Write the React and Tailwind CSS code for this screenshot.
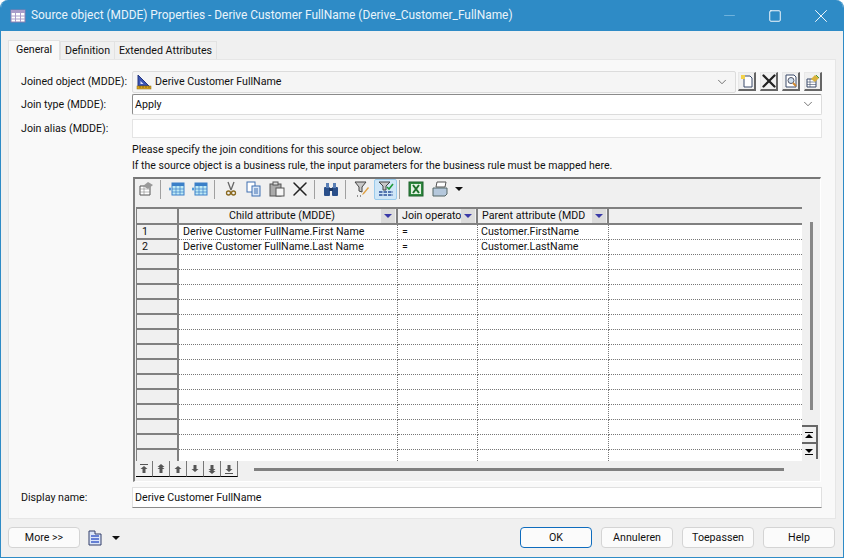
import React from 'react';
import { ChevronDown, Minus, Square, X } from 'lucide-react';

const Chevron = () => <ChevronDown className="w-[14px] h-[14px] text-[#444]" strokeWidth={1.25} />;

const TableIcon = ({ className = 'w-4 h-4' }) => (
  <svg viewBox="0 0 16 16" className={className}>
    <rect x="1" y="2" width="14" height="12" fill="#fff" stroke="#8a7fb0" />
    <rect x="1" y="2" width="14" height="3" fill="#a99cc9" />
    <path d="M1 8h14M1 11h14M5.500 5v9M10.500 5v9" stroke="#a99cc9" />
  </svg>
);

const RuleIcon = () => (
  <svg viewBox="0 0 16 16" className="w-4 h-4">
    <path d="M2 1v11h11z" fill="#3b55b5" stroke="#24367f" />
    <path d="M4.500 7v3h3z" fill="#dfe6fa" />
    <rect x="1" y="12" width="14" height="3" fill="#d9a520" stroke="#8a6a10" strokeWidth=".5" />
    <path d="M4 12v2M7 12v2M10 12v2M13 12v2" stroke="#6b5208" strokeWidth=".7" />
  </svg>
);

const SquareButton = ({ children }) => (
  <button className="w-[18px] h-[19px] bg-[#f0f0f0] border border-[#e8e8e8] border-r-2 border-b-2 border-r-[#666] border-b-[#666] flex items-center justify-center overflow-hidden">
    {children}
  </button>
);

const Sep = ({ className }) => <div className={`w-px h-[19px] bg-[#a0a0a0] shrink-0 ${className}`} />;

const GridColumns = ({ className }) => (
  <svg viewBox="0 0 16 16" className={`w-4 h-4 shrink-0 ${className}`}>
    <rect x="3" y="2" width="12" height="12" fill="#bfeaf5" stroke="#3a7fc8" />
    <rect x="3" y="2" width="12" height="3" fill="#3a7fc8" />
    <path d="M3 8h12M3 11h12M7 5v9M11 5v9" stroke="#3a7fc8" strokeWidth=".7" />
    <path d="M0 8h2M1 6.500v3" stroke="#1a7fd0" />
  </svg>
);

const NavArrow = ({ dir, count = 1, bar }) => {
  const up = dir === 'up';
  return (
    <button className="w-[17px] h-[16px] bg-[#f0f0f0] border-r border-b border-b-black border-r-[#777] flex items-center justify-center">
      <svg viewBox="0 0 10 10" className="w-[10px] h-[10px]">
        <g fill="#555" transform={up ? undefined : 'rotate(180 5 5)'}>
          {bar && <rect x="1" y="0" width="8" height="1" />}
          <path d="M5 2l3.500 3h-2v4h-3v-4h-2z" />
          {count > 1 && <path d="M5 0l3.500 3h-7z" />}
        </g>
      </svg>
    </button>
  );
};

const rows = [
  ['1', 'Derive Customer FullName.First Name', '=', 'Customer.FirstName'],
  ['2', 'Derive Customer FullName.Last Name', '=', 'Customer.LastName'],
  ...Array.from({ length: 14 }, () => ['', '', '', '']),
];

const HeaderCell = ({ label, width, center }) => (
  <div className={`${width} h-full bg-[#f0f0f0] border-r-2 border-r-[#808080] flex items-center pl-1`}>
    <span className={`${center ? 'flex-1 text-center' : ''} whitespace-nowrap pb-[2px]`}>{label}</span>
    <span className="w-[14px] h-[14px] mr-[1px] shrink-0 ml-auto bg-[#dcdcdc] flex items-center justify-center">
      <svg viewBox="0 0 8 4" className="w-2 h-1"><path d="M0 0h8L4 4z" fill="#3a3aa8" /></svg>
    </span>
  </div>
);

const footerButton = 'w-[72px] h-[21px] bg-[#fbfbfb] border rounded-[4px]';

export default function App() {
  return (
    <div className="w-[844px] h-[558px] flex flex-col bg-[#f0f0f0] border-x border-b border-[#2e8bc6] rounded-t-lg overflow-hidden text-[10.67px] leading-[15px] text-[#111] [font-family:Roboto,sans-serif]">
      {/* Title bar */}
      <div className="h-[31px] -mx-px bg-[#2e8bc6] text-[#e9f4fb] flex items-center pl-[10px] shrink-0">
        <TableIcon />
        <span className="ml-[5px] text-[11.9px]">Source object (MDDE) Properties - Derive Customer FullName (Derive_Customer_FullName)</span>
        <div className="ml-auto flex items-center">
          <Minus className="w-[17px] h-[17px] mr-[30px] text-[#6fb2dc]" strokeWidth={1.4} />
          <Square className="w-[14px] h-[14px] mr-[28px] text-white" strokeWidth={1.6} />
          <X className="w-[22px] h-[22px] mr-[12px] text-white" strokeWidth={1} />
        </div>
      </div>

      {/* Tabs */}
      <div className="flex items-end pl-[7px] pt-[8px] h-[28px] shrink-0 relative z-10 whitespace-nowrap">
        <div className="h-[20px] w-[52px] bg-[#f9f9f9] border border-b-0 border-[#e2e2e2] flex items-center justify-center -mb-px pb-[2px]">General</div>
        <div className="h-[18px] w-[55px] border border-b-0 border-[#e2e2e2] flex items-center justify-center">Definition</div>
        <div className="h-[18px] w-[102px] border border-b-0 border-l-0 border-[#e2e2e2] flex items-center justify-center">Extended Attributes</div>
      </div>

      {/* Page */}
      <div className="mx-[7px] h-[460px] bg-[#f9f9f9] border border-[#e6e6e6] pl-[12px] pr-[11px] pt-[10px] flex flex-col shrink-0">
        <div className="flex items-center h-[23px]">
          <label className="w-[111px]">Joined object (MDDE):</label>
          <div className="w-[604px] h-[22px] bg-[#f5f5f5] border border-[#dcdcdc] rounded-[2px] flex items-center pl-[3px] pr-[6px]">
            <RuleIcon />
            <span className="ml-[3px]">Derive Customer FullName</span>
            <span className="ml-auto"><Chevron /></span>
          </div>
          <div className="flex gap-[4px] ml-[2px]">
            <SquareButton>
              <svg viewBox="0 0 14 14" className="w-[14px] h-[14px]">
                <path d="M4 2h6l2 2v9H4z" fill="#fff" stroke="#3a4a6a" />
                <rect x="1" y="1" width="4" height="4" fill="#f3d24a" />
              </svg>
            </SquareButton>
            <SquareButton><X className="w-[22px] h-[22px] shrink-0 text-[#222]" strokeWidth={2.5} /></SquareButton>
            <SquareButton>
              <svg viewBox="0 0 14 14" className="w-[14px] h-[14px]">
                <path d="M2 1h8l2 2v10H2z" fill="#fff" stroke="#3a4a6a" />
                <circle cx="7" cy="6.500" r="3" fill="#cfe0ee" stroke="#556" />
                <path d="M9 9l3 3" stroke="#d08a30" strokeWidth="2" />
              </svg>
            </SquareButton>
            <SquareButton>
              <svg viewBox="0 0 14 14" className="w-[14px] h-[14px]">
                <path d="M1 5h9v8H1z" fill="#fff" stroke="#3a4a6a" />
                <path d="M1 8h9M1 10.500h9M4 5v8" stroke="#3a4a6a" strokeWidth=".6" />
                <path d="M5 5l4-4 4 3-4 4z" fill="#d9b13a" />
                <path d="M10 1l3 3" stroke="#4a9a3a" />
              </svg>
            </SquareButton>
          </div>
        </div>

        <div className="flex items-center h-[22px]">
          <label className="w-[111px]">Join type (MDDE):</label>
          <div className="w-[690px] h-[21px] bg-white border border-[#8a8a8a] border-r-[#dcdcdc] border-b-[#dcdcdc] rounded-[2px] flex items-center pl-[2px] pr-[6px]">
            <span>Apply</span>
            <span className="ml-auto"><Chevron /></span>
          </div>
        </div>

        <div className="flex items-center h-[19px] mt-[4px]">
          <label className="w-[111px]">Join alias (MDDE):</label>
          <div className="w-[690px] h-[19px] bg-white border border-[#e4e4e4]" />
        </div>

        <div className="ml-[111px] mt-[4px] text-[10.52px] leading-[15px] whitespace-nowrap">
          <p>Please specify the join conditions for this source object below.</p>
          <p className="mt-[1px]">If the source object is a business rule, the input parameters for the business rule must be mapped here.</p>
        </div>

        {/* Grid control */}
        <div className="ml-[112px] mt-[4px] w-[688px] h-[305px] bg-[#f0f0f0] border-t-2 border-t-[#777] border-l-2 border-l-[#808080] border-r border-r-[#fff] border-b border-b-[#fff] flex flex-col pl-px shrink-0">
          <div className="h-[28px] flex items-center pl-[2px] pb-[8px] shrink-0">
            <svg viewBox="0 0 16 16" className="w-4 h-4 shrink-0">
              <path d="M2 5h10v9H2z" fill="#fff" stroke="#555" />
              <path d="M2 8h10M2 11h10M6 5v9" stroke="#888" strokeWidth=".6" />
              <path d="M5 5l5-4 5 3-5 4z" fill="#999" />
            </svg>
            <Sep className="ml-[6px]" />
            <GridColumns className="ml-[8px]" />
            <GridColumns className="ml-[7px]" />
            <Sep className="ml-[6px]" />
            <svg viewBox="0 0 16 16" className="w-4 h-4 shrink-0 ml-[8px]">
              <path d="M5 1l3 8M11 1L8 9" stroke="#666" strokeWidth="1.300" />
              <circle cx="5.500" cy="12" r="2" fill="none" stroke="#8a6a20" strokeWidth="1.300" />
              <circle cx="10.500" cy="12" r="2" fill="none" stroke="#8a6a20" strokeWidth="1.300" />
            </svg>
            <svg viewBox="0 0 16 16" className="w-4 h-4 shrink-0 ml-[7px]">
              <rect x="1" y="1" width="8" height="10" fill="#fff" stroke="#3f6fb0" />
              <rect x="6" y="5" width="8" height="10" fill="#dbe8f8" stroke="#3f6fb0" />
              <path d="M8 8h4M8 10h4M8 12h4" stroke="#3f6fb0" />
            </svg>
            <svg viewBox="0 0 16 16" className="w-4 h-4 shrink-0 ml-[7px]">
              <rect x="1" y="3" width="11" height="12" fill="#aaa" stroke="#555" />
              <rect x="4" y="1" width="5" height="3" fill="#ddd" stroke="#555" />
              <rect x="7" y="7" width="8" height="8" fill="#f5f5f5" stroke="#555" />
            </svg>
            <X className="w-[24px] h-[24px] shrink-0 ml-[3px] text-[#222]" strokeWidth={1.5} />
            <Sep className="ml-[2px]" />
            <svg viewBox="0 0 16 16" className="w-4 h-4 shrink-0 ml-[8px]">
              <rect x="1" y="6" width="6" height="9" rx="1" fill="#2a4f8a" />
              <rect x="9" y="6" width="6" height="9" rx="1" fill="#2a4f8a" />
              <rect x="3" y="2" width="3" height="5" fill="#5a7fb5" />
              <rect x="10" y="2" width="3" height="5" fill="#5a7fb5" />
              <rect x="6" y="7" width="4" height="3" fill="#1d3a68" />
            </svg>
            <Sep className="ml-[6px]" />
            <svg viewBox="0 0 16 16" className="w-4 h-4 shrink-0 ml-[8px]">
              <path d="M1 1h11L8 6v5L5 10V6z" fill="#c8c8c8" stroke="#444" />
              <path d="M14 6l-5 6-1 2 2-1 5-6z" fill="#e0a040" />
              <path d="M3 15h1M6 15h1" stroke="#333" />
            </svg>
            <span className="w-[23px] h-[21px] shrink-0 bg-[#cfe6f7] border border-[#9bcbec] rounded-[2px] flex items-center justify-center ml-[4px]">
              <svg viewBox="0 0 16 16" className="w-4 h-4">
                <path d="M1 1h11L8 5v4H5V5z" fill="#c8c8c8" stroke="#444" />
                <path d="M9 6l2 2 4-5" fill="none" stroke="#1f9a3a" strokeWidth="1.600" />
                <path d="M1 11h14M1 14h14" stroke="#2a4f9a" strokeWidth="1.300" strokeDasharray="3.500 1" />
              </svg>
            </span>
            <Sep className="ml-[2px]" />
            <svg viewBox="0 0 16 16" className="w-4 h-4 shrink-0 ml-[8px]">
              <rect x="1" y="1" width="14" height="14" fill="#2f8a3f" stroke="#1d5f2a" />
              <rect x="3" y="3" width="10" height="10" fill="#e4f2e4" />
              <path d="M5 4l6 8M11 4l-6 8" stroke="#1d6f2a" strokeWidth="2" />
            </svg>
            <svg viewBox="0 0 16 16" className="w-4 h-4 shrink-0 ml-[8px]">
              <path d="M5 1h9l-1 5H4z" fill="#fff" stroke="#555" />
              <path d="M1 7h14v6l-2 2H1z" fill="#b5c8dc" stroke="#566" />
            </svg>
            <svg viewBox="0 0 8 4" className="w-2 h-1 shrink-0 ml-[7px]"><path d="M0 0h8L4 4z" fill="#111" /></svg>
          </div>

          <div className="flex-1 min-h-0 flex">
            <div className="flex-1 min-w-0 flex flex-col">
              <div className="h-[254px] bg-white border-l border-[#808080] overflow-hidden shrink-0">
                <div className="h-[18px] bg-[#f0f0f0] border-t-2 border-b-2 border-y-[#808080] flex">
                  <div className="w-[42px] border-r-2 border-r-[#808080]" />
                  <HeaderCell label="Child attribute (MDDE)" width="w-[219px]" center />
                  <HeaderCell label="Join operato" width="w-[80px]" />
                  <HeaderCell label="Parent attribute (MDD" width="w-[131px]" />
                </div>
                {rows.map((r, i) => (
                  <div key={i} className="h-[15px] flex leading-[14px]">
                    <div className="w-[42px] pl-[5px] bg-[#f0f0f0] border-r-2 border-b-2 border-r-[#808080] border-b-[#808080]">{r[0]}</div>
                    <div className="w-[219px] pl-[4px] border-r border-b border-dotted border-[#777] whitespace-nowrap">{r[1]}</div>
                    <div className="w-[80px] pl-[4px] border-r border-b border-dotted border-[#777]">{r[2]}</div>
                    <div className="w-[131px] pl-[3px] border-r border-b border-dotted border-[#777]">{r[3]}</div>
                    <div className="flex-1 border-b border-dotted border-[#777]" />
                  </div>
                ))}
              </div>
              <div className="flex items-start h-[19px]">
                <div className="flex">
                  <NavArrow dir="up" bar />
                  <NavArrow dir="up" count={2} />
                  <NavArrow dir="up" />
                  <NavArrow dir="down" />
                  <NavArrow dir="down" count={2} />
                  <NavArrow dir="down" bar />
                </div>
                <div className="ml-[16px] mt-[7px] w-[530px] h-[3px] bg-[#808080]" />
              </div>
            </div>

            <div className="w-[18px] shrink-0 flex flex-col items-center relative pt-[15px]">
              <div className="w-[3px] h-[188px] bg-[#888]" />
              <div className="absolute top-[218px] left-0 flex flex-col">
                {[true, false].map((up) => (
                  <button key={String(up)} className="w-[16px] h-[17px] bg-[#f0f0f0] border-t-2 border-r-2 border-[#666] flex items-center justify-center">
                    <svg viewBox="0 0 8 8" className="w-[8px] h-[8px]">
                      {up ? <path d="M0 1h8v1H0zM4 3l4 4H0z" fill="#000" /> : <path d="M0 1h8L4 5zM0 6h8v1H0z" fill="#000" />}
                    </svg>
                  </button>
                ))}
              </div>
            </div>
          </div>
        </div>

        <div className="flex items-center h-[21px] mt-[5px]">
          <label className="w-[111px]">Display name:</label>
          <div className="w-[690px] h-[21px] bg-white border border-[#e0e0e0] border-b-[#8a8a8a] flex items-center pl-[2px]">Derive Customer FullName</div>
        </div>
      </div>

      {/* Footer */}
      <div className="flex-1 flex items-center pl-[7px] pr-[7px] pb-[1px]">
        <button className={`${footerButton} border-[#d4d4d4]`}>More &gt;&gt;</button>
        <svg viewBox="0 0 16 16" className="w-4 h-4 ml-[7px]">
          <path d="M2 1h6v3h6v11H2z" fill="#dce6f8" stroke="#333f6a" />
          <path d="M4 6h8M4 9h8M4 12h8" stroke="#3f5fc8" strokeWidth="1.500" />
        </svg>
        <svg viewBox="0 0 8 4" className="w-2 h-1 ml-[9px]"><path d="M0 0h8L4 4z" fill="#111" /></svg>
        <div className="ml-auto flex gap-[9px] pr-px">
          <button className={`${footerButton} border-[#0f6cbd]`}>OK</button>
          <button className={`${footerButton} border-[#d4d4d4]`}>Annuleren</button>
          <button className={`${footerButton} border-[#d4d4d4]`}>Toepassen</button>
          <button className={`${footerButton} border-[#d4d4d4]`}>Help</button>
        </div>
      </div>
    </div>
  );
}
